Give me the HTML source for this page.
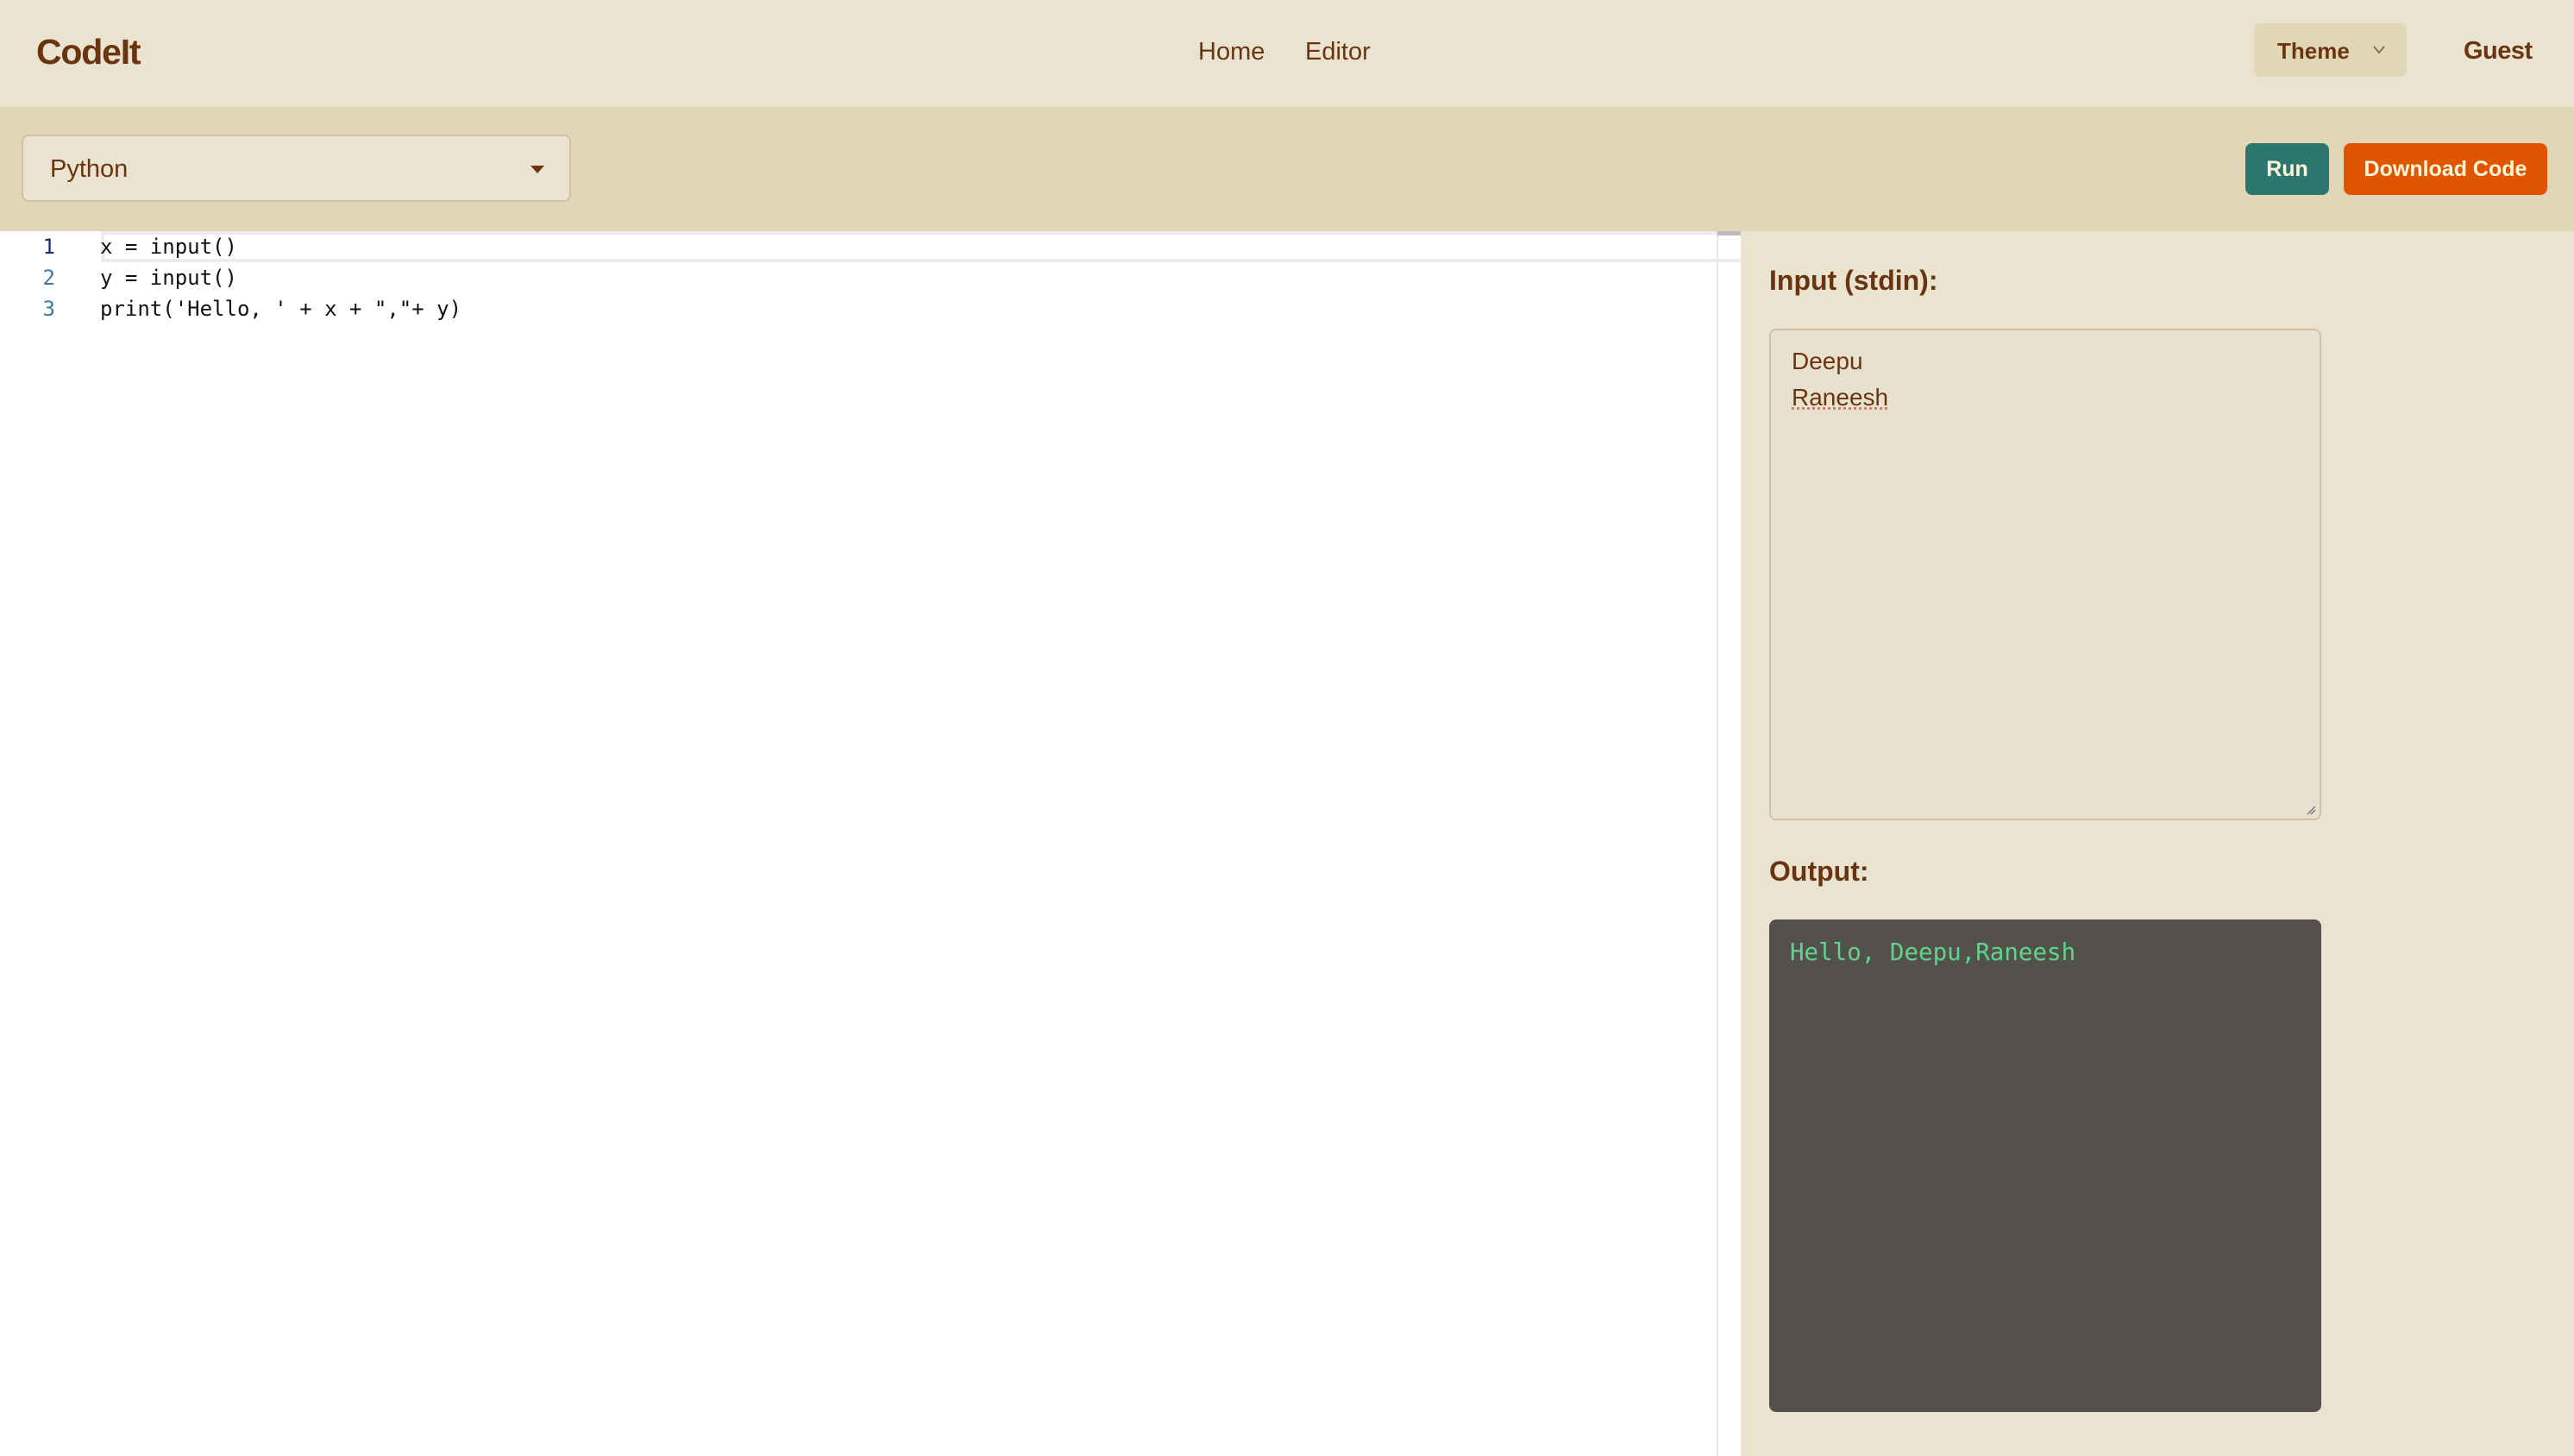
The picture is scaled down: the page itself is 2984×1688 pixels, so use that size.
<!DOCTYPE html>
<html><head><meta charset="utf-8"><style>
*{margin:0;padding:0;box-sizing:border-box}
body{width:2984px;height:1688px;overflow:hidden;background:#fff;font-family:"Liberation Sans",sans-serif;color:#6b3411;position:relative}
.hdr{position:absolute;left:0;top:0;width:2984px;height:124px;background:#e9e3cf}
.logo{position:absolute;left:42px;top:37px;font-size:41px;font-weight:bold;color:#6b3411;letter-spacing:-1.2px}
.nav{position:absolute;top:44px;font-size:29px;color:#6b3411}
.theme{position:absolute;left:2613px;top:27px;width:177px;height:62px;background:#e1d7b7;border-radius:8px}
.theme span{position:absolute;left:27px;top:17px;font-size:26px;font-weight:bold}
.guest{position:absolute;left:2856px;top:43px;font-size:29px;font-weight:bold;letter-spacing:-0.5px}
.tb{position:absolute;left:0;top:124px;width:2984px;height:144px;background:#e1d7b7}
.sel{position:absolute;left:25px;top:156px;width:637px;height:78px;background:#e9e3cf;border:2px solid #d3bfa5;border-radius:8px}
.sel span{position:absolute;left:31px;top:22px;font-size:29px}
.caret{position:absolute;left:588px;top:34px;width:0;height:0;border-left:8px solid transparent;border-right:8px solid transparent;border-top:9px solid #6b3411}
.btn{position:absolute;top:166px;height:60px;border-radius:8px;color:#fff5d8;font-weight:bold;font-size:25px;text-align:center;line-height:60px}
.ed{position:absolute;left:0;top:268px;width:2018px;height:1420px;background:#fff}
.vl{position:absolute;left:1990px;top:268px;width:2px;height:1420px;background:#e6e6e6}
.thumb{position:absolute;left:1991px;top:268px;width:27px;height:5px;background:#bbb}
.act{position:absolute;left:117px;top:268px;width:1901px;height:36px;border:4px solid #ececec;border-right:none}
.ln{position:absolute;left:34px;width:30px;text-align:right;font-family:"DejaVu Sans Mono",monospace;font-size:24px}
.code{position:absolute;left:116px;font-family:"DejaVu Sans Mono",monospace;font-size:24px;color:#111;white-space:pre}
.rp{position:absolute;left:2018px;top:268px;width:966px;height:1420px;background:#e9e3cf}
.lbl{position:absolute;left:2051px;font-size:32px;font-weight:bold}
.ta{position:absolute;left:2051px;top:381px;width:640px;height:570px;border:2px solid #d3bfa5;border-radius:8px;background:#e8e1cd}
.ta div{position:absolute;left:24px;font-size:28px;color:#6b3411}
.out{position:absolute;left:2051px;top:1066px;width:640px;height:571px;background:#54514c;border-radius:8px}
.out div{position:absolute;left:24px;top:22px;font-family:"DejaVu Sans Mono",monospace;font-size:27.5px;color:#5fd48a;white-space:pre}
</style></head><body>
<div class="hdr">
<div class="logo">CodeIt</div>
<div class="nav" style="left:1389px">Home</div>
<div class="nav" style="left:1513px">Editor</div>
<div class="theme"><span>Theme</span>
<svg style="position:absolute;left:137px;top:25px" width="16" height="12" viewBox="0 0 16 12"><path d="M2 2 L8 9 L14 2" fill="none" stroke="#8a6a4a" stroke-width="2"/></svg></div>
<div class="guest">Guest</div>
</div>
<div class="tb">
</div>
<div class="sel"><span>Python</span><div class="caret"></div></div>
<div class="btn" style="left:2603px;width:97px;background:#2d7670">Run</div>
<div class="btn" style="left:2717px;width:236px;background:#e05500">Download Code</div>
<div class="ed"></div>
<div class="act"></div>
<div class="vl"></div>
<div class="thumb"></div>
<div class="ln" style="top:272px;color:#1a2a7a">1</div>
<div class="ln" style="top:308px;color:#3b7a9c">2</div>
<div class="ln" style="top:344px;color:#3b7a9c">3</div>
<div class="code" style="top:272px">x = input()</div>
<div class="code" style="top:308px">y = input()</div>
<div class="code" style="top:344px">print('Hello, ' + x + ","+ y)</div>
<div class="rp"></div>
<div class="lbl" style="top:307px">Input (stdin):</div>
<div class="ta"><div style="top:20px">Deepu</div><div style="top:62px;text-decoration:underline dotted #e07060">Raneesh</div>
<svg style="position:absolute;right:4px;bottom:4px" width="12" height="12"><path d="M2 11 L11 2 M6 11 L11 6" stroke="#777" stroke-width="1.5"/></svg></div>
<div class="lbl" style="top:992px">Output:</div>
<div class="out"><div>Hello, Deepu,Raneesh</div></div>
</body></html>
